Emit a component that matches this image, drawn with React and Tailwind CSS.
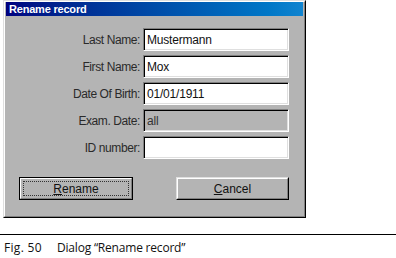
export default function App() {
  const sunken =
    "h-[23px] border border-t-[#808080] border-l-[#808080] border-b-white border-r-white shadow-[inset_1px_1px_0_#000,inset_-1px_-1px_0_#dfdfdf] pl-[3px] flex items-center text-[12px] leading-none tracking-[-0.2px]";
  const label =
    "h-[23px] flex items-center justify-end text-[12px] text-[#2a2a2a] tracking-[-0.4px]";
  const rows = [
    ["Last Name:", "Mustermann", false],
    ["First Name:", "Mox", false],
    ["Date Of Birth:", "01/01/1911", false],
    ["Exam. Date:", "all", true],
    ["ID number:", "", false],
  ];
  return (
    <div className="w-[396px] h-[258px] bg-white overflow-hidden pt-0">
      <div
        className="ml-[3px] w-[303px] h-[218px] border border-t-[#dfdfdf] border-l-[#dfdfdf] border-r-black border-b-black"
        style={{ fontFamily: '"Liberation Sans", Arial, sans-serif' }}
      >
        <div className="h-full border border-t-white border-l-white border-r-[#808080] border-b-[#808080] bg-[#b4b4b4] px-px pb-px flex flex-col">
          <div className="h-[14px] bg-gradient-to-r from-[#000080] to-[#1084d0] text-white font-bold text-[11px] leading-[14px] pl-[3px] tracking-[-0.2px]">
            Rename record
          </div>
          <div className="mt-[12px] grid grid-cols-[134px_146px] gap-x-[3px] gap-y-[4px]">
            {rows.map(([l, v, dis]) => (
              <div key={l} className="contents">
                <div className={label}>{l}</div>
                <div
                  className={
                    sunken +
                    (dis ? " bg-[#b4b4b4] text-[#333]" : " bg-white text-[#111]")
                  }
                >
                  {v}
                </div>
              </div>
            ))}
          </div>
          <div className="mt-[18px] flex pl-[13px] gap-[43px]">
            <div className="w-[114px] h-[23px] border border-black">
              <div className="h-full border border-t-white border-l-white border-r-[#808080] border-b-[#808080] p-[2px]">
                <div className="h-full border border-dotted border-[#333] flex items-center justify-center text-[12px] text-[#111]">
                  <span>
                    <span className="underline">R</span>ename
                  </span>
                </div>
              </div>
            </div>
            <div className="w-[113px] h-[23px] border border-t-[#dfdfdf] border-l-[#dfdfdf] border-r-black border-b-black">
              <div className="h-full border border-t-white border-l-white border-r-[#808080] border-b-[#808080] flex items-center justify-center text-[12px] text-[#111]">
                <span>
                  <span className="underline">C</span>ancel
                </span>
              </div>
            </div>
          </div>
        </div>
      </div>
      <div className="mt-[16px] h-px bg-black w-full" />
      <div
        className="mt-[5px] pl-[4px] text-[12px] leading-[16px] text-[#111] flex"
        style={{ fontFamily: '"Open Sans", "Noto Sans", sans-serif' }}
      >
        <span className="w-[53px] tracking-[0.3px]">Fig. 50</span>
        <span className="tracking-[-0.2px]">Dialog “Rename record”</span>
      </div>
    </div>
  );
}
